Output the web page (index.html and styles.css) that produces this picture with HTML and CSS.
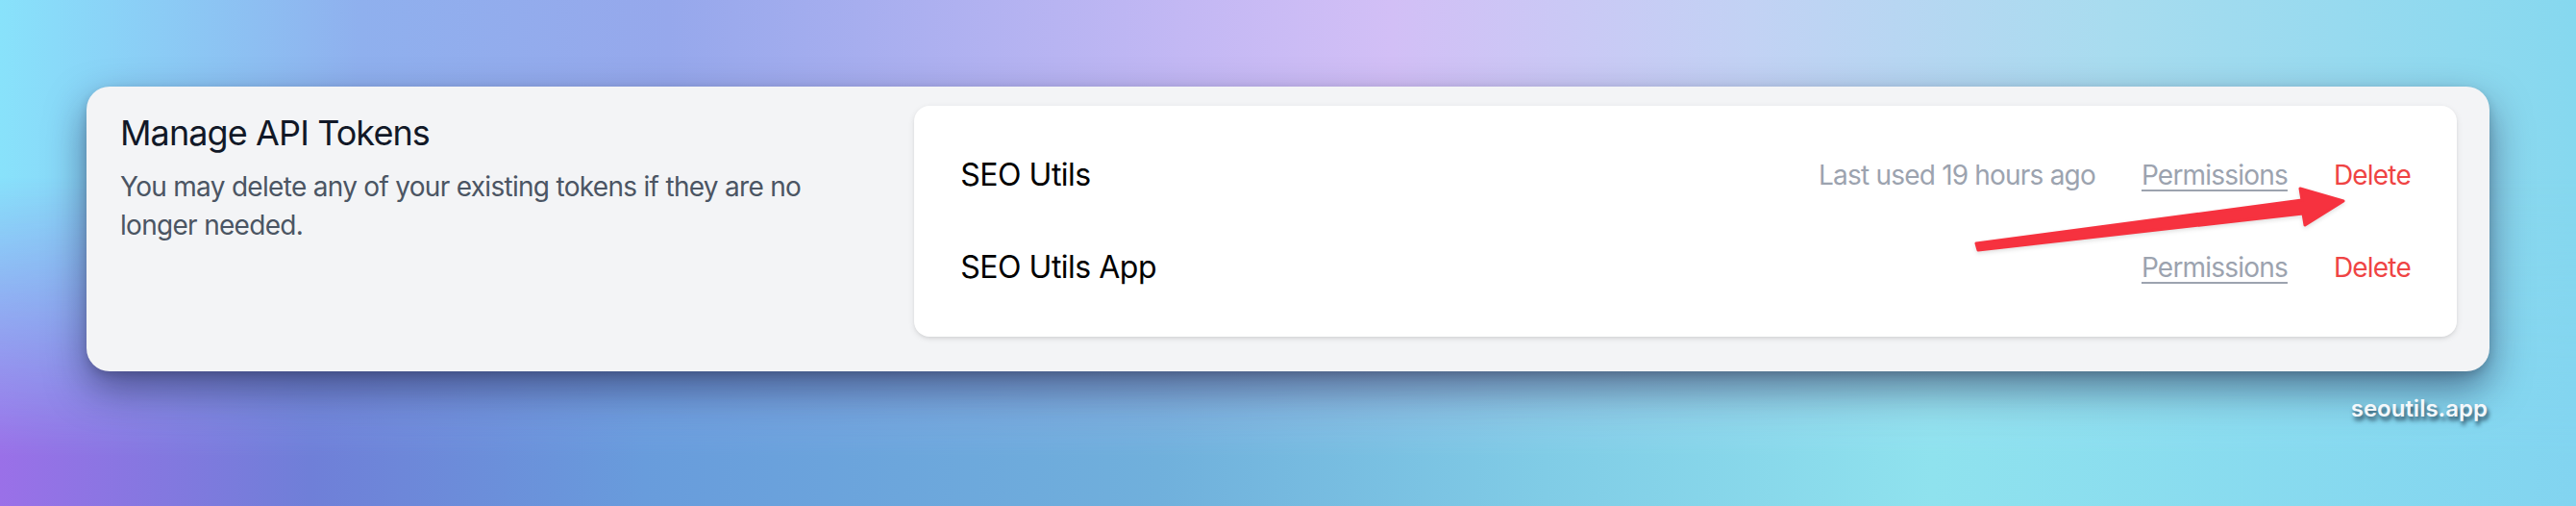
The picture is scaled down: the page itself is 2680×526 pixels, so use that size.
FILE: index.html
```html
<!DOCTYPE html>
<html lang="en">
<head>
  <meta charset="UTF-8" />
  <meta name="viewport" content="width=device-width, initial-scale=1.0"/>
  <title>Manage API Tokens</title>
  <link rel="stylesheet" href="styles.css">
</head>
<body>
  <div class="backdrop"></div>
  <div class="page">
    <div class="panel">
      <div class="section-title">
        <h3>Manage API Tokens</h3>
        <p>You may delete any of your existing tokens if they are no longer needed.</p>
      </div>

      <div class="token-card">
        <div class="token-row">
          <div class="token-name">SEO Utils</div>
          <div class="token-actions">
            <div class="last-used">Last used 19 hours ago</div>
            <button class="link permissions">Permissions</button>
            <button class="link delete">Delete</button>
          </div>
        </div>
        <div class="token-row">
          <div class="token-name">SEO Utils App</div>
          <div class="token-actions">
            <button class="link permissions">Permissions</button>
            <button class="link delete">Delete</button>
          </div>
        </div>
      </div>
    </div>

    <div class="watermark">seoutils.app</div>

    <!-- annotation arrow -->
    <svg class="arrow" width="2680" height="526" viewBox="0 0 2680 526">
      <polygon points="2056,253 2395,208 2393,196 2438,209 2398,234 2396,222 2058,260"
               fill="#f6323f" stroke="#f6323f" stroke-width="3" stroke-linejoin="round"/>
    </svg>
  </div>
</body>
</html>
```

FILE: styles.css
```css
* {
  box-sizing: border-box;
}

html, body {
  margin: 0;
  height: 100%;
}

body {
  font-family: Inter, "Noto Sans", sans-serif;
  position: relative;
  overflow: hidden;
  background-color: #86b4ec;
  background-image: linear-gradient(90deg, #88e2fb 0%, #8fb0ee 14%, #96a8ec 26%, #c3b8f4 46%, #d2bff6 54%, #c2d2f4 68%, #a8dcef 82%, #86d8ef 100%);
}

/* lower half of the backdrop, faded in from the bottom */
.backdrop {
  position: absolute;
  inset: 0;
  background-image: linear-gradient(90deg, #9a70e8 0%, #6f7fd8 12%, #689cdc 25%, #70b0dc 45%, #80cce6 60%, #8fe2ee 75%, #82d4f0 100%);
  -webkit-mask-image: linear-gradient(to bottom, transparent 35%, #000 90%);
  mask-image: linear-gradient(to bottom, transparent 35%, #000 90%);
}

.page {
  position: relative;
  padding: 90px 90px 0;
  height: 100%;
}

.panel {
  width: 2500px;
  background: #f3f4f6;
  border-radius: 24px;
  padding: 20px 34px 36px 35px;
  display: grid;
  grid-template-columns: repeat(3, 1fr);
  gap: 48px;
  box-shadow: 0 18px 40px rgba(20, 20, 60, 0.5), 0 4px 10px rgba(0, 0, 0, 0.15);
}

.section-title h3 {
  margin: 0;
  font-size: 36px;
  line-height: 56px;
  font-weight: 400;
  color: #111827;
  letter-spacing: -0.9px;
}

.section-title p {
  margin: 8px 0 0;
  font-size: 28px;
  line-height: 40px;
  color: #4b5563;
  max-width: 720px;
  letter-spacing: -0.7px;
}

.token-card {
  grid-column: span 2;
  background: #fff;
  border-radius: 16px;
  padding: 48px;
  display: flex;
  flex-direction: column;
  gap: 48px;
  box-shadow: 0 2px 6px rgba(0, 0, 0, 0.1), 0 2px 4px -2px rgba(0, 0, 0, 0.1);
}

.token-row {
  display: flex;
  align-items: center;
  justify-content: space-between;
  height: 48px;
}

.token-name {
  font-size: 32px;
  line-height: 48px;
  color: #000;
  letter-spacing: -0.5px;
}

.token-actions {
  display: flex;
  align-items: center;
  gap: 48px;
}

.last-used,
.link {
  font-family: inherit;
  font-size: 28px;
  line-height: 40px;
  letter-spacing: -0.8px;
}

.last-used {
  color: #9ca3af;
}

.link {
  background: none;
  border: none;
  padding: 0;
  cursor: pointer;
}

.permissions {
  color: #9ca3af;
  text-decoration: underline;
  text-decoration-thickness: 2px;
  text-underline-offset: 5px;
}

.delete {
  color: #ef4444;
}

.watermark {
  width: 2500px;
  margin-top: 24px;
  padding-right: 2px;
  text-align: right;
  font-size: 24px;
  font-weight: 600;
  color: #f4f8fb;
  text-shadow: 2px 4px 4px rgba(10, 30, 50, 0.75);
}

.arrow {
  position: absolute;
  left: 0;
  top: 0;
  pointer-events: none;
  filter: drop-shadow(0 2px 2px rgba(0, 0, 0, 0.12));
}
```
